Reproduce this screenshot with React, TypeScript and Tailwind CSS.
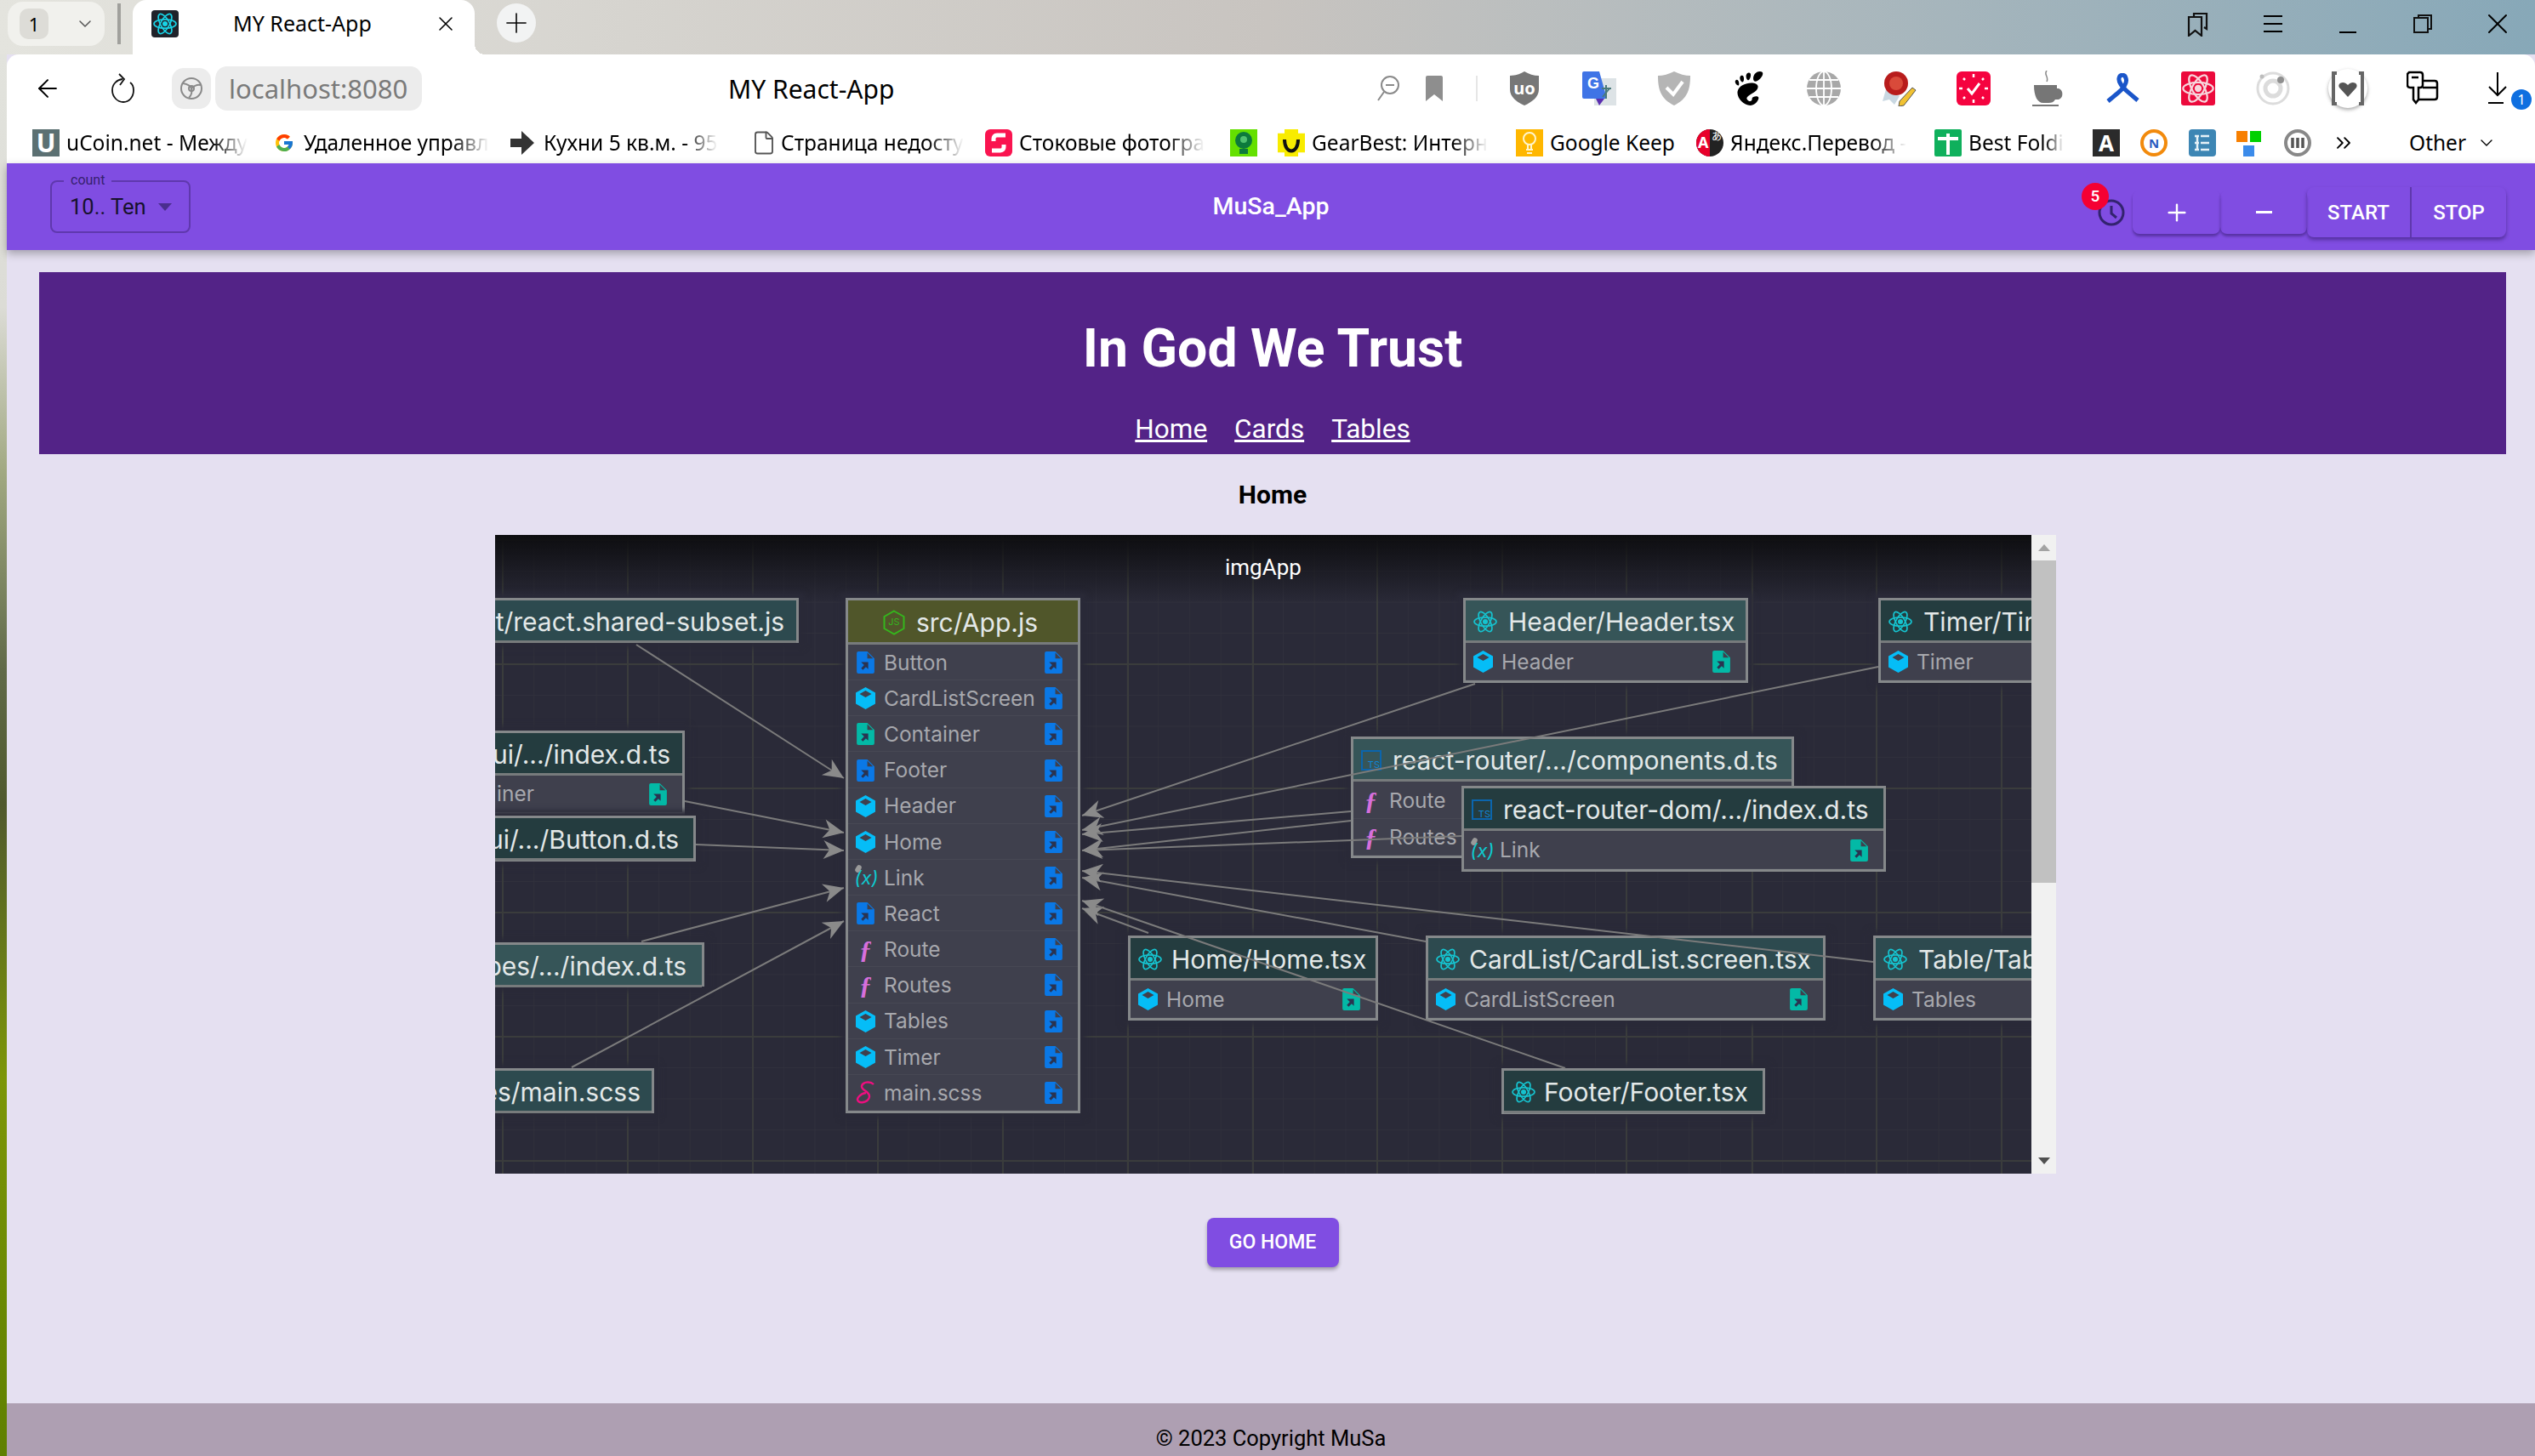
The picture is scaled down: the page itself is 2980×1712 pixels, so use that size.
import React from "react";
import { FcGoogle } from "react-icons/fc";
import { SiGnome } from "react-icons/si";
import { ChevronDown, Plus, X, ChevronsRight, ArrowLeft, File as FileIcon } from "lucide-react";

const Atom = ({ c = "#16c3cf", s = 28 }: { c?: string; s?: number }) => (
  <svg width={s} height={s} viewBox="0 0 28 28" fill="none" stroke={c} strokeWidth="1.7" className="shrink-0">
    <ellipse cx="14" cy="14" rx="13" ry="5.2" />
    <ellipse cx="14" cy="14" rx="13" ry="5.2" transform="rotate(60 14 14)" />
    <ellipse cx="14" cy="14" rx="13" ry="5.2" transform="rotate(120 14 14)" />
    <circle cx="14" cy="14" r="2.2" fill={c} />
  </svg>
);

const Cube = () => (
  <svg width="23" height="26" viewBox="0 0 23 26" className="shrink-0">
    <path d="M11.5 0 23 6.5v13L11.5 26 0 19.5v-13z" fill="#05bdf7" />
    <path d="M11.5 4 18.5 8 11.5 12 4.5 8z" fill="#3f404d" />
  </svg>
);

const FileArrow = ({ c = "#0a78e6" }: { c?: string }) => (
  <svg width="21" height="26" viewBox="0 0 20 25" className="shrink-0">
    <path d="M2 0h10l8 8v15a2 2 0 0 1-2 2H2a2 2 0 0 1-2-2V2a2 2 0 0 1 2-2z" fill={c} />
    <path d="M12 1.5 18.5 8H12z" fill="#3f404d" />
    <path d="M5 12h8v8l-2.600-2.500L7 21l-2-2 3.400-3.500z" fill="#2a3350" />
  </svg>
);

const Fn = () => <span className="w-[23px] shrink-0 text-center font-['Liberation_Serif',serif] text-[30px] font-bold italic leading-none text-[#d76fdc]">ƒ</span>;
const Vx = () => (
  <span className="relative w-[26px] shrink-0 text-center text-[22px] italic leading-none text-[#0fc9cf]">
    (x)
    <span className="absolute left-[1px] top-[-4px] h-[9px] w-[6px] rotate-[30deg] rounded-full bg-[#9a9a9a]" />
  </span>
);
const Sass = () => (
  <svg width="23" height="28" viewBox="0 0 23 28" fill="none" stroke="#ee0f7f" strokeWidth="2.400" className="shrink-0">
    <path d="M21 4C17 0 8 1 7 6c-1 5 9 6 9 12 0 6-9 9-13 6-3-3 2-9 9-10" />
  </svg>
);
const Ts = () => (
  <span className="relative h-[24px] w-[24px] shrink-0 border-2 border-[#0b65ad]">
    <span className="absolute bottom-[-1px] right-[0px] text-[11px] leading-none text-[#0f86d6]">TS</span>
  </span>
);
const Js = () => (
  <span className="relative flex h-[30px] w-[26px] shrink-0 items-center justify-center">
    <svg width="26" height="30" viewBox="0 0 26 30" fill="none" stroke="#35b51d" strokeWidth="2" className="absolute inset-0">
      <path d="M13 1.500 24.500 8v14L13 28.500 1.500 22V8z" />
    </svg>
    <span className="relative text-[11px] leading-none text-[#35b51d]">JS</span>
  </span>
);

type Row = { icon: React.ReactNode; label: string; right?: React.ReactNode };

const HDR_LIGHT = "bg-[#365558]";
const HDR_MID = "bg-[#2d4a4f]";
const HDR_DARK = "bg-[#243c3f]";

function Node({ pos, hdr, icon, title, rows, halo = true, headClass = "pl-[9px] gap-[13px]" }: {
  pos: string; hdr: string; icon?: React.ReactNode; title: string; rows?: Row[]; halo?: boolean; headClass?: string;
}) {
  return (
    <div className={`absolute flex flex-col border-[3px] border-[#85888a] bg-[#3f404d] ${halo ? "shadow-[0_0_6px_6px_#2a2a38]" : ""} ${pos}`}>
      <div className={`flex h-[50px] shrink-0 items-center whitespace-nowrap border-b-[3px] border-[#777b7c] pt-[2px] font-['Inter',sans-serif] text-[30px] leading-none text-[#e3e8e8] ${hdr} ${headClass}`}>
        {icon}
        <span>{title}</span>
      </div>
      {rows?.map((r) => (
        <div key={r.label} className="flex min-h-0 flex-1 items-center whitespace-nowrap border-b border-[#474854] pl-[9px] pr-[18px] pt-[1px] font-['Inter',sans-serif] text-[24.500px] leading-none text-[#a7a8ad]">
          {r.icon ? <span className="mr-[10px] flex w-[23px] shrink-0 justify-center">{r.icon}</span> : null}
          <span>{r.label}</span>
          <span className="flex-1" />
          {r.right}
        </div>
      ))}
    </div>
  );
}

const blue = <FileArrow />;
const teal = <FileArrow c="#03b9a6" />;

const mainRows: Row[] = [
  { icon: <FileArrow />, label: "Button" },
  { icon: <Cube />, label: "CardListScreen" },
  { icon: <FileArrow c="#03b9a6" />, label: "Container" },
  { icon: <FileArrow />, label: "Footer" },
  { icon: <Cube />, label: "Header" },
  { icon: <Cube />, label: "Home" },
  { icon: <Vx />, label: "Link" },
  { icon: <FileArrow />, label: "React" },
  { icon: <Fn />, label: "Route" },
  { icon: <Fn />, label: "Routes" },
  { icon: <Cube />, label: "Tables" },
  { icon: <Cube />, label: "Timer" },
  { icon: <Sass />, label: "main.scss" },
];

const edges: [number, number, number, number][] = [
  [748, 758, 992, 915],
  [805, 942, 992, 979],
  [818, 993, 992, 1000],
  [754, 1107, 992, 1044],
  [672, 1255, 992, 1083],
  [1734, 804, 1272, 959],
  [2208, 784, 1272, 976],
  [1588, 954, 1272, 981],
  [1588, 965, 1272, 1000],
  [1718, 983, 1272, 1000],
  [1676, 1107, 1272, 1032],
  [2202, 1131, 1272, 1024],
  [1350, 1097, 1272, 1068],
  [1840, 1256, 1272, 1059],
];

function head(x1: number, y1: number, x2: number, y2: number) {
  const d = Math.hypot(x2 - x1, y2 - y1);
  const ux = (x2 - x1) / d, uy = (y2 - y1) / d;
  const nx = -uy, ny = ux;
  const L = 24, W = 11, N = 17;
  return [
    [x2, y2],
    [x2 - ux * L + nx * W, y2 - uy * L + ny * W],
    [x2 - ux * N, y2 - uy * N],
    [x2 - ux * L - nx * W, y2 - uy * L - ny * W],
  ].map((p) => p.join(",")).join(" ");
}

const majorX = [591, 738, 885, 1032, 1179, 1326, 1473, 1619, 1766, 1912, 2060, 2206, 2353];
const majorY = [635, 781, 927, 1073, 1219, 1365];
const minorX = Array.from({ length: 50 }, (_, i) => 591 + i * 36.7);
const minorY = Array.from({ length: 21 }, (_, i) => 635 + i * 36.5);

function Diagram() {
  return (
    <div className="relative h-[751px] w-[1806px] shrink-0 overflow-hidden bg-[#2a2a38]">
      <svg viewBox="582 629 1806 751" className="absolute inset-0 h-full w-full">
        {minorX.map((x) => <line key={x} x1={x} x2={x} y1={629} y2={1380} stroke="#30303c" strokeWidth="1" />)}
        {minorY.map((y) => <line key={y} y1={y} y2={y} x1={582} x2={2388} stroke="#30303c" strokeWidth="1" />)}
        {majorX.map((x) => <line key={x} x1={x} x2={x} y1={629} y2={1380} stroke="#3a3c3c" strokeWidth="2" />)}
        {majorY.map((y) => <line key={y} y1={y} y2={y} x1={582} x2={2388} stroke="#3a3c3c" strokeWidth="2" />)}
      </svg>
      <div className="absolute inset-x-0 top-0 h-[80px] bg-gradient-to-b from-[#0d0d10] to-transparent" />

      <Node pos="left-[-20px] top-[74px] h-[53px] w-[377px]" hdr={HDR_MID} title="t/react.shared-subset.js" headClass="justify-end pr-[14px] h-[47px]" />
      <Node pos="left-[-10px] top-[230px] h-[99px] w-[233px]" hdr={HDR_DARK} title="ui/.../index.d.ts" headClass="justify-end pr-[14px]"
        rows={[{ icon: null, label: "iner", right: teal }]} />
      <Node pos="left-[-20px] top-[330px] h-[54px] w-[256px]" hdr={HDR_DARK} title="ui/.../Button.d.ts" headClass="justify-end pr-[17px] h-[48px]" />
      <Node pos="left-[-20px] top-[479px] h-[52px] w-[266px]" hdr={HDR_LIGHT} title="bes/.../index.d.ts" headClass="justify-end pr-[18px] h-[46px]" />
      <Node pos="left-[-20px] top-[627px] h-[53px] w-[207px]" hdr={HDR_MID} title="es/main.scss" headClass="justify-end pr-[13px] h-[47px]" />

      <Node pos="left-[412px] top-[74px] h-[606px] w-[276px]" hdr="bg-[#50562a]" icon={<Js />} title="src/App.js" headClass="justify-center gap-[13px] pr-[6px] h-[52px]"
        rows={mainRows.map((r) => ({ ...r, right: blue }))} />

      <Node pos="left-[1138px] top-[74px] h-[100px] w-[335px]" hdr={HDR_LIGHT} icon={<Atom />} title="Header/Header.tsx" rows={[{ icon: <Cube />, label: "Header", right: teal }]} />
      <Node pos="left-[1626px] top-[74px] h-[100px] w-[300px]" hdr={HDR_DARK} icon={<Atom />} title="Timer/Timer.tsx" rows={[{ icon: <Cube />, label: "Timer", right: teal }]} />
      <Node pos="left-[1006px] top-[237px] h-[143px] w-[521px]" hdr={HDR_LIGHT} icon={<Ts />} title="react-router/.../components.d.ts" rows={[{ icon: <Fn />, label: "Route" }, { icon: <Fn />, label: "Routes" }]} />
      <Node pos="left-[1136px] top-[295px] h-[101px] w-[499px]" hdr={HDR_DARK} icon={<Ts />} title="react-router-dom/.../index.d.ts" halo={false} rows={[{ icon: <Vx />, label: "Link", right: teal }]} />
      <Node pos="left-[744px] top-[471px] h-[100px] w-[294px]" hdr={HDR_DARK} icon={<Atom />} title="Home/Home.tsx" headClass="pl-[9px] gap-[11px]" rows={[{ icon: <Cube />, label: "Home", right: teal }]} />
      <Node pos="left-[1094px] top-[471px] h-[100px] w-[470px]" hdr={HDR_MID} icon={<Atom />} title="CardList/CardList.screen.tsx" headClass="pl-[9px] gap-[11px]" rows={[{ icon: <Cube />, label: "CardListScreen", right: teal }]} />
      <Node pos="left-[1620px] top-[471px] h-[100px] w-[300px]" hdr={HDR_MID} icon={<Atom />} title="Table/Table.tsx" rows={[{ icon: <Cube />, label: "Tables", right: teal }]} />
      <Node pos="left-[1183px] top-[627px] h-[54px] w-[310px]" hdr={HDR_DARK} icon={<Atom />} title="Footer/Footer.tsx" headClass="pl-[9px] gap-[10px] h-[48px]" />

      <svg viewBox="582 629 1806 751" className="absolute inset-0 h-full w-full">
        {edges.map(([a, b, c, d], i) => (
          <g key={i}>
            <line x1={a} y1={b} x2={c} y2={d} stroke="#7b7b7b" strokeWidth="2" />
            <polygon points={head(a, b, c, d)} fill="#8a8a8a" />
          </g>
        ))}
      </svg>
      <span className="absolute left-[858px] top-[23px] font-['Roboto',sans-serif] text-[26px] leading-[30px] text-white">imgApp</span>
    </div>
  );
}

function Scrollbar() {
  return (
    <div className="flex w-[29px] flex-col items-center bg-[#f1f1f1]">
      <div className="flex h-[30px] w-full items-center justify-center">
        <span className="h-0 w-0 border-x-[7px] border-b-[8px] border-x-transparent border-b-[#a3a3a3]" />
      </div>
      <div className="h-[379px] w-full bg-[#c1c1c1]" />
      <div className="flex-1" />
      <div className="flex h-[30px] w-full items-center justify-center">
        <span className="h-0 w-0 border-x-[7px] border-t-[8px] border-x-transparent border-t-[#505050]" />
      </div>
    </div>
  );
}

function Square({ c, children }: { c: string; children?: React.ReactNode }) {
  return <span className={`flex h-[32px] w-[32px] shrink-0 items-center justify-center ${c}`}>{children}</span>;
}

function Bm({ w, icon, text, gap = "gap-[8px]", fade = true }: { w: string; icon: React.ReactNode; text: string; gap?: string; fade?: boolean }) {
  return (
    <div className={`flex shrink-0 items-center ${gap} ${w}`}>
      {icon}
      <span className={`whitespace-nowrap ${fade ? "[mask-image:linear-gradient(to_right,black_80%,transparent)]" : ""}`}>{text}</span>
    </div>
  );
}

const Slot = ({ children }: { children: React.ReactNode }) => (
  <div className="relative flex h-[48px] w-[88px] shrink-0 items-center justify-center">{children}</div>
);

function ExtIcons() {
  return (
    <div className="flex shrink-0 items-center">
      <Slot>
        <svg width="36" height="40" viewBox="0 0 36 40"><path d="M18 0c5 3 11 5 17 5v16c0 9-8 15-17 19C9 36 1 30 1 21V5c6 0 12-2 17-5z" fill="#777" /></svg>
        <span className="absolute font-['Noto_Sans',sans-serif] text-[20px] font-bold leading-none text-white">uo</span>
      </Slot>
      <Slot>
        <svg width="40" height="40" viewBox="0 0 40 40">
          <rect x="14" y="8" width="26" height="32" fill="#dde3e6" />
          <path d="M0 2a2 2 0 0 1 2-2h18l9 32H2a2 2 0 0 1-2-2z" fill="#3f74e6" />
          <path d="M16 32h10l-6 8z" fill="#5b2fb0" />
          <path d="M28 16v16M23 20h11M24 30l8-10" stroke="#4b7a7a" strokeWidth="2" fill="none" />
        </svg>
        <span className="absolute left-[30px] top-[9px] font-['Liberation_Sans',sans-serif] text-[18px] font-bold leading-none text-white">G</span>
      </Slot>
      <Slot>
        <svg width="40" height="40" viewBox="0 0 40 40">
          <path d="M20 0c6 3 13 5 19 5 0 16-3 27-19 35C4 32 1 21 1 5c6 0 13-2 19-5z" fill="#b5b5b5" />
          <path d="M11 19l8 8 11-15" stroke="#fff" strokeWidth="4" fill="none" />
        </svg>
      </Slot>
      <Slot><SiGnome size={40} color="#000" /></Slot>
      <Slot>
        <svg width="40" height="40" viewBox="0 0 40 40" fill="none" stroke="#fff" strokeWidth="1.800">
          <circle cx="20" cy="20" r="20" fill="#a8a8a8" stroke="none" />
          <ellipse cx="20" cy="20" rx="9" ry="20" />
          <path d="M20 0v40M0 20h40M3 10h34M3 30h34" />
        </svg>
      </Slot>
      <Slot>
        <svg width="42" height="42" viewBox="0 0 42 42">
          <path d="M6 22l-4 14 8-2 6 6 6-10z" fill="#c9d8e2" />
          <circle cx="18" cy="15" r="14" fill="#b81c1c" />
          <circle cx="18" cy="15" r="8" fill="#d94a3a" />
          <path d="M37 20l4 3-14 18-6 1 1-6z" fill="#f1c232" stroke="#555" />
        </svg>
      </Slot>
      <Slot>
        <span className="relative flex h-[40px] w-[40px] items-center justify-center rounded-[6px] bg-[#f5033f]">
          <svg width="40" height="40" viewBox="0 0 40 40" stroke="#fff" fill="none" strokeWidth="3">
            <path d="M13 20l5 6 9-12" />
            <path d="M20 3v4M20 33v4M3 20h4M33 20h4M8 8l2 2M32 8l-2 2M8 32l2-2M32 32l-2-2" strokeWidth="2.500" />
          </svg>
        </span>
      </Slot>
      <Slot>
        <svg width="40" height="42" viewBox="0 0 40 42">
          <path d="M3 17h27v4h2a7 7 0 0 1 0 13c-1 0-3 0-4 0-2 3-4 4-8 4h-6c-7 0-11-8-11-21z" fill="#767676" />
          <path d="M1 40h31v2H1z" fill="#767676" />
          <path d="M18 0c-4 5 3 7 0 13" stroke="#888" strokeWidth="1.500" fill="none" />
        </svg>
      </Slot>
      <Slot>
        <svg width="40" height="36" viewBox="0 0 40 36" fill="none" stroke="#1a55c9" strokeWidth="5">
          <path d="M2 33 14 23c8-7 11-12 9-17-1-5-7-5-8 0-1 5 4 10 9 15l13 11" />
        </svg>
      </Slot>
      <Slot>
        <span className="relative flex h-[40px] w-[40px] items-center justify-center rounded-[3px] bg-[#ec0a3c]"><Atom c="#f7d7dd" s={38} /></span>
      </Slot>
      <Slot>
        <svg width="40" height="40" viewBox="0 0 40 40" fill="none">
          <circle cx="20" cy="20" r="18" stroke="#dcdcdc" strokeWidth="3" />
          <circle cx="20" cy="20" r="9" stroke="#dcdcdc" strokeWidth="5" />
          <circle cx="29" cy="10" r="4" fill="#8f8f8f" />
          <circle cx="7" cy="6" r="2.500" fill="#bdbdbd" />
        </svg>
      </Slot>
      <Slot>
        <span className="flex h-[46px] w-[46px] items-center justify-center rounded-full bg-white shadow-[0_2px_4px_rgba(0,0,0,0.35)]">
          <svg width="40" height="40" viewBox="0 0 40 40" fill="none" stroke="#666" strokeWidth="4">
            <path d="M7 2H3v36h4M33 2h4v36h-4" />
            <path d="M20 30 10 19c-3-5 5-9 10-3 5-6 13-2 10 3z" fill="#555" stroke="none" />
          </svg>
        </span>
      </Slot>
      <Slot>
        <svg width="38" height="42" viewBox="0 0 38 42" fill="none" stroke="#000" strokeWidth="2.500">
          <path d="M3 2h13c2 0 3 1 3 3v12c0 2-1 3-3 3h-2v14l-3 4-3-4V20H4c-2 0-3-1-3-3V4z" />
          <path d="M6 8h8" />
          <path d="M19 12h14c2 0 3 1 3 3v16c0 2-1 3-3 3H14" />
          <path d="M19 20h17" />
        </svg>
      </Slot>
      <Slot>
        <svg width="24" height="38" viewBox="0 0 24 38" fill="none" stroke="#000" strokeWidth="2">
          <path d="M12 0v27M2 17l10 10 10-10M1 36h18" />
        </svg>
        <span className="absolute left-[60px] top-[25px] flex h-[24px] w-[24px] items-center justify-center rounded-full bg-[#0f6fe0] font-['Noto_Sans',sans-serif] text-[16px] leading-none text-white">1</span>
      </Slot>
    </div>
  );
}

export default function App() {
  return (
    <div className="flex h-[1712px] w-[2980px] flex-col overflow-hidden bg-[#e2e2dc] font-['Noto_Sans',sans-serif] text-black">
      {/* tab strip */}
      <div className="flex h-[64px] shrink-0 bg-gradient-to-r from-[#e4e4de] via-[#c8c4c0] to-[#87a8b8]">
        <div className="ml-[9px] mt-[2px] flex h-[52px] w-[114px] items-center rounded-[18px] bg-[#f1f1ed]">
          <span className="ml-[14px] flex h-[36px] w-[34px] items-center justify-center rounded-[10px] bg-[#dddcd7] text-[22px] leading-none">1</span>
          <ChevronDown size={24} strokeWidth={1.5} className="ml-[31px] text-[#555]" />
        </div>
        <div className="ml-[15px] mt-[4px] h-[48px] w-[4px] bg-[#a0a09c]" />
        <div className="relative ml-[14px] flex w-[402px] items-center rounded-t-[16px] bg-white pb-[8px] pl-[22px] pr-[20px] text-[25px] text-black">
          <span className="flex h-[32px] w-[32px] items-center justify-center rounded-[4px] bg-[#20232a]"><Atom c="#19d3e6" s={28} /></span>
          <span className="ml-[64px] whitespace-nowrap">MY React-App</span>
          <span className="flex-1" />
          <X size={28} strokeWidth={1.3} />
          <span className="absolute bottom-0 left-full h-[12px] w-[12px] bg-[radial-gradient(circle_at_100%_0,transparent_12px,white_12px)]" />
        </div>
        <div className="ml-[26px] mt-[4px] flex h-[46px] w-[46px] items-center justify-center rounded-full bg-[#f2f3f3]">
          <Plus size={38} strokeWidth={1} />
        </div>
        <div className="flex-1" />
        <div className="flex items-center pb-[8px]">
          <div className="flex w-[88px] justify-center">
            <svg width="26" height="30" viewBox="0 0 26 30" fill="none" stroke="#111" strokeWidth="2.200">
              <path d="M8 6V3h15v18l-3-2" />
              <path d="M2 7h15v22l-7.500-6L2 29z" />
            </svg>
          </div>
          <div className="flex w-[88px] flex-col items-center gap-[7px]">
            <span className="h-[2px] w-[22px] bg-black" /><span className="h-[2px] w-[22px] bg-black" /><span className="h-[2px] w-[22px] bg-black" />
          </div>
          <div className="flex h-[22px] w-[88px] items-end justify-center"><span className="h-[2px] w-[20px] bg-black" /></div>
          <div className="flex w-[88px] justify-center">
            <svg width="22" height="22" viewBox="0 0 22 22" fill="none" stroke="#111" strokeWidth="2"><path d="M6 4V1h15v16h-4" /><rect x="1" y="4" width="16" height="17" /></svg>
          </div>
          <div className="flex w-[88px] justify-center"><X size={40} strokeWidth={1.2} /></div>
        </div>
      </div>

      <div className="flex min-h-0 flex-1">
        <div className="w-[8px] shrink-0 bg-[linear-gradient(to_bottom,#e2e3dd_0%,#dcdcd6_18%,#a0a880_30%,#606a48_44%,#50592d_53.5%,#7c9608_73%,#5f8000_100%)]" />
        <div className="flex min-w-0 flex-1 flex-col bg-[#e5e0f1]">
          {/* browser toolbar */}
          <div className="h-[128px] shrink-0 rounded-t-[14px] bg-white">
            <div className="flex h-[80px] items-center">
              <ArrowLeft size={34} strokeWidth={1.4} className="ml-[31px]" />
              <svg width="32" height="36" viewBox="0 0 32 36" fill="none" stroke="#111" strokeWidth="1.800" className="ml-[56px]">
                <path d="M15 7C8 8 3 13 3 20c0 8 6 14 13 14s12-6 12-14c0-4-1-7-4-9" />
                <path d="M11 1l6 6-5 7" />
              </svg>
              <div className="ml-[41px] flex h-[48px] w-[46px] items-center justify-center rounded-[14px] bg-[#ececec]">
                <svg width="28" height="28" viewBox="0 0 28 28" fill="none" stroke="#8a8a8a" strokeWidth="2"><circle cx="14" cy="14" r="12" /><circle cx="14" cy="14" r="3" /><path d="M4 8c6 1 9 3 10 6m0 0c1 4 0 8-3 11m3-11c3-3 6-5 11-4" /></svg>
              </div>
              <div className="ml-[5px] flex h-[52px] w-[243px] items-center rounded-[14px] bg-[#ececec] pl-[16px] text-[31px] text-[#7a7a7a]">localhost:8080</div>
              <span className="ml-[360px] whitespace-nowrap text-[30px]">MY React-App</span>
              <div className="flex-1" />
              <svg width="26" height="30" viewBox="0 0 26 30" fill="none" stroke="#8a8a8a" strokeWidth="2"><circle cx="15" cy="11" r="10" /><path d="M10 11h10M8 19 1 29" /></svg>
              <svg width="20" height="30" viewBox="0 0 20 30" fill="#8e8e8e" className="ml-[31px]"><path d="M2 0h16a2 2 0 0 1 2 2v28l-10-8-10 8V2a2 2 0 0 1 2-2z" /></svg>
              <div className="ml-[39px] mr-[11px] h-[30px] w-[2px] bg-[#e6e6e6]" />
              <ExtIcons />
            </div>
            <div className="flex h-[48px] items-center pl-[30px] text-[24.500px]">
              <Bm w="w-[255px]" text="uCoin.net - Между" icon={<Square c="bg-[#5b7072]"><span className="text-[30px] font-bold leading-none text-white">U</span></Square>} />
              <Bm w="w-[252px] ml-[29px]" gap="gap-[11px]" text="Удаленное управл" icon={<span className="flex w-[24px] shrink-0 justify-center"><FcGoogle size={26} /></span>} />
              <div className="ml-[26px]" />
              <Bm w="w-[245px]" gap="gap-[11px]" text="Кухни 5 кв.м. - 95" icon={<svg width="28" height="28" viewBox="0 0 28 28" className="shrink-0"><path d="M0 9h13V0l15 14-15 14V19H0z" fill="#333" /></svg>} />
              <Bm w="w-[248px] ml-[38px]" gap="gap-[5px]" text="Страница недосту" icon={<FileIcon size={30} strokeWidth={1.5} className="shrink-0 text-[#555]" />} />
              <Bm w="w-[256px] ml-[27px]" text="Стоковые фотогра" icon={<Square c="rounded-[6px] bg-[#fa1450]"><svg width="20" height="24" viewBox="0 0 20 24" fill="none" stroke="#fff" strokeWidth="5"><path d="M18 3H8C5 3 4 5 4 7v3M2 21h10c3 0 4-2 4-4v-3" /></svg></Square>} />
              <div className="ml-[32px]"><Square c="bg-[#64e000]"><svg width="24" height="28" viewBox="0 0 24 28"><circle cx="12" cy="11" r="10" fill="#0c7a3c" /><circle cx="12" cy="10" r="4" fill="#4fc070" /><rect x="7" y="21" width="10" height="6" fill="#0c7a3c" /></svg></Square></div>
              <Bm w="w-[255px] ml-[24px]" text="GearBest: Интерн" icon={<Square c="bg-[#f8ec00] [clip-path:polygon(25%_0,75%_0,75%_15%,100%_15%,100%_85%,75%_85%,75%_100%,25%_100%,25%_85%,0_85%,0_15%,25%_15%)]"><svg width="24" height="24" viewBox="0 0 24 24" fill="none" stroke="#111" strokeWidth="4"><path d="M4 8c0 18 16 18 16 0" /></svg></Square>} />
              <Bm w="w-[186px] ml-[25px]" fade={false} text="Google Keep" icon={<Square c="bg-[#ffb700]"><svg width="18" height="26" viewBox="0 0 18 26" fill="none" stroke="#fff5cc" strokeWidth="2"><circle cx="9" cy="8" r="7" /><path d="M5 21h8M6 25h6M7 14v6M11 14v6" /></svg></Square>} />
              <Bm w="w-[254px] ml-[26px]" text="Яндекс.Перевод -" icon={<span className="relative flex h-[32px] w-[32px] shrink-0 overflow-hidden rounded-full bg-[#222]"><span className="h-full w-1/2 bg-[#e8002b]" /><span className="absolute left-[2px] top-[6px] text-[18px] font-bold leading-none text-white">A</span><span className="absolute right-[2px] top-[2px] font-['Noto_Sans_CJK_JP',sans-serif] text-[12px] leading-none text-white">あ</span></span>} />
              <Bm w="w-[162px] ml-[26px]" text="Best Foldi" icon={<Square c="rounded-[2px] bg-[#0fb05c]"><svg width="24" height="28" viewBox="0 0 24 28" fill="#fff"><path d="M10 3h4v25h-4zM0 7h24v4H0z" /></svg></Square>} />
              <div className="ml-[24px]"><Square c="bg-[#2b2b2b]"><span className="text-[26px] font-bold leading-none text-white">A</span></Square></div>
              <div className="ml-[24px]"><Square c="rounded-full border-[4px] border-[#f28a0c] bg-white"><span className="text-[15px] font-bold leading-none text-[#2a5bc0]">N</span></Square></div>
              <div className="ml-[25px]"><Square c="rounded-[4px] bg-[#3d86b4]"><svg width="22" height="24" viewBox="0 0 22 24" fill="none" stroke="#e6f1f7" strokeWidth="2.500"><path d="M5 4v16M9 4h10M9 12h10M9 20h10M2 4h5M2 12h5M2 20h5" /></svg></Square></div>
              <div className="ml-[24px]"><svg width="30" height="32" viewBox="0 0 30 32" className="shrink-0"><rect x="0" y="2" width="13" height="13" fill="#f77f00" /><rect x="16" y="2" width="13" height="13" fill="#00d000" /><rect x="8" y="19" width="13" height="13" fill="#3b8bea" /></svg></div>
              <div className="ml-[26px]"><svg width="32" height="32" viewBox="0 0 32 32" fill="none" className="shrink-0"><circle cx="16" cy="16" r="14" stroke="#888" strokeWidth="4" /><path d="M10 10v12M16 10v12M22 10v12" stroke="#555" strokeWidth="3.500" /></svg></div>
              <ChevronsRight size={28} strokeWidth={1.6} className="ml-[24px]" />
              <span className="ml-[63px]">Other</span>
              <ChevronDown size={24} strokeWidth={1.4} className="ml-[12px]" />
            </div>
          </div>

          {/* app bar */}
          <header className="relative z-10 grid h-[102px] shrink-0 grid-cols-[1fr_auto_1fr] items-center bg-[#804de2] font-['Roboto',sans-serif] shadow-[0_4px_10px_rgba(0,0,0,0.3)]">
            <div className="relative ml-[51px] flex h-[62px] w-[165px] items-center rounded-[8px] border-2 border-[#5f38ad] pl-[21px]">
              <span className="absolute left-[14px] top-[-11px] bg-[#804de2] px-[8px] text-[16px] leading-[18px] text-[#36216f]">count</span>
              <span className="pt-[2px] text-[25.500px] leading-none text-[#17122c]">10.. Ten</span>
              <span className="ml-[14px] h-0 w-0 border-x-[8px] border-t-[9px] border-x-transparent border-t-[#4a2e8f]" />
            </div>
            <div className="text-[28.500px] font-medium leading-none text-white">MuSa_App</div>
            <div className="mr-[34px] mt-[13px] flex items-center justify-end">
              <div className="relative mr-[9px] h-[32px] w-[32px]">
                <svg width="32" height="32" viewBox="0 0 32 32" fill="none" stroke="#33236f" strokeWidth="3"><circle cx="16" cy="16" r="14" /><path d="M16 8v9l6 5" /></svg>
                <span className="absolute left-[-19px] top-[-19px] flex h-[32px] w-[32px] items-center justify-center rounded-full bg-[#f50033] text-[19px] font-medium leading-none text-white">5</span>
              </div>
              <div className="flex h-[51px] w-[103px] items-center justify-center rounded-[8px] shadow-[0_3px_3px_rgba(40,20,90,0.45)]">
                <Plus size={32} strokeWidth={1.8} className="text-white" />
              </div>
              <div className="flex h-[51px] w-[102px] items-center justify-center rounded-[8px] shadow-[0_3px_3px_rgba(40,20,90,0.45)]">
                <span className="h-[3px] w-[19px] bg-white" />
              </div>
              <div className="flex h-[59px] w-[234px] rounded-[8px] text-[24px] font-medium text-white shadow-[0_3px_4px_rgba(40,20,90,0.5)]">
                <span className="flex w-[123px] items-center justify-center border-r-2 border-[#5f38ad]">START</span>
                <span className="flex flex-1 items-center justify-center">STOP</span>
              </div>
            </div>
          </header>

          {/* page */}
          <main className="flex min-h-0 flex-1 flex-col pl-[38px] pr-[34px] font-['Roboto',sans-serif]">
            <section className="mt-[26px] flex h-[214px] shrink-0 flex-col items-center bg-[#532387] text-white">
              <h1 className="mt-[55px] text-[62.500px] font-bold leading-[70px]">In God We Trust</h1>
              <nav className="mt-[41px] flex gap-[32px] text-[31.500px] leading-[38px] underline">
                <span>Home</span><span>Cards</span><span>Tables</span>
              </nav>
            </section>
            <div className="mt-[30px] text-center text-[30px] font-bold leading-[36px]">Home</div>
            <div className="ml-[536px] mt-[29px] flex h-[751px] w-[1835px] shrink-0">
              <Diagram />
              <Scrollbar />
            </div>
            <button className="mt-[52px] h-[58px] w-[155px] self-center rounded-[8px] bg-[#804de2] text-[23px] font-medium text-white shadow-[0_3px_4px_rgba(0,0,0,0.3)]">GO HOME</button>
            <div className="flex-1" />
          </main>

          <footer className="flex h-[62px] shrink-0 items-end justify-center bg-[#ae9fb2] pb-[6px] font-['Roboto',sans-serif] text-[25.500px] leading-[30px]">
            © 2023 Copyright MuSa
          </footer>
        </div>
      </div>
    </div>
  );
}
